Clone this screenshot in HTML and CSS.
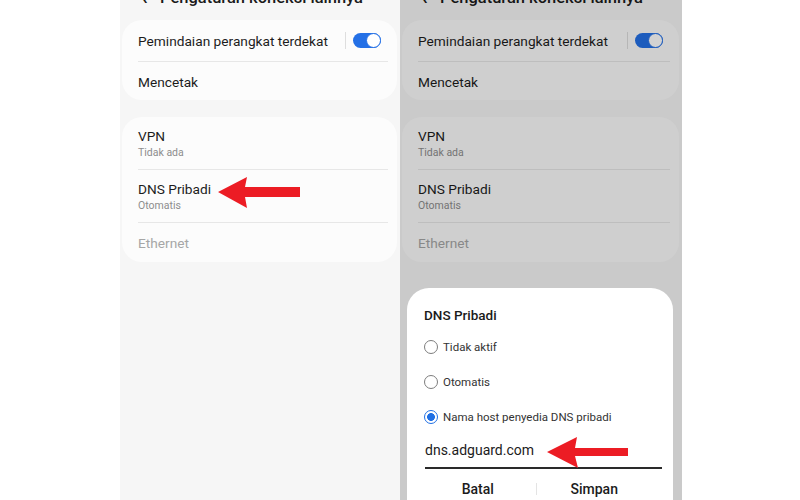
FILE: index.html
```html
<!DOCTYPE html>
<html lang="id">
<head>
<meta charset="utf-8">
<title>DNS Pribadi</title>
<link rel="stylesheet" href="styles.css">
</head>
<body>
<div class="stage">
  <div class="phone phone-left">
    <div class="header"><span class="back">&lsaquo;</span><span class="title">Pengaturan koneksi lainnya</span></div>
    <div class="card">
      <div class="row row-toggle">
        <span class="label">Pemindaian perangkat terdekat</span>
        <span class="vsep"></span>
        <span class="toggle"><span class="knob"></span></span>
      </div>
      <div class="sep"></div>
      <div class="row row-plain"><span class="label">Mencetak</span></div>
    </div>
    <div class="card card2">
      <div class="row row-two"><span class="label">VPN</span><span class="sub">Tidak ada</span></div>
      <div class="sep"></div>
      <div class="row row-two"><span class="label">DNS Pribadi</span><span class="sub">Otomatis</span></div>
      <div class="sep"></div>
      <div class="row row-last"><span class="label dim">Ethernet</span></div>
    </div>
  </div>

  <div class="phone phone-right">
    <div class="header"><span class="back">&lsaquo;</span><span class="title">Pengaturan koneksi lainnya</span></div>
    <div class="card">
      <div class="row row-toggle">
        <span class="label">Pemindaian perangkat terdekat</span>
        <span class="vsep"></span>
        <span class="toggle"><span class="knob"></span></span>
      </div>
      <div class="sep"></div>
      <div class="row row-plain"><span class="label">Mencetak</span></div>
    </div>
    <div class="card card2">
      <div class="row row-two"><span class="label">VPN</span><span class="sub">Tidak ada</span></div>
      <div class="sep"></div>
      <div class="row row-two"><span class="label">DNS Pribadi</span><span class="sub">Otomatis</span></div>
      <div class="sep"></div>
      <div class="row row-last"><span class="label dim">Ethernet</span></div>
    </div>
    <div class="scrim"></div>
    <div class="dialog">
      <div class="dlg-title">DNS Pribadi</div>
      <div class="radio-row"><span class="radio"></span><span class="radio-label">Tidak aktif</span></div>
      <div class="radio-row"><span class="radio"></span><span class="radio-label">Otomatis</span></div>
      <div class="radio-row"><span class="radio radio-on"></span><span class="radio-label">Nama host penyedia DNS pribadi</span></div>
      <div class="input">dns.adguard.com</div>
      <div class="buttons">
        <span class="btn">Batal</span>
        <span class="btn-sep"></span>
        <span class="btn">Simpan</span>
      </div>
    </div>
  </div>

  <svg class="arrow arrow-left" width="84" height="32" viewBox="0 0 84 32">
    <polygon points="0,15 29,0 27,10 82,10 82,20 27,20 29,31" fill="#ec1c24"/>
  </svg>
  <svg class="arrow arrow-right" width="84" height="32" viewBox="0 0 84 32">
    <polygon points="0,15 30,0 28,11 81,11 81,19 28,19 31,31" fill="#ec1c24"/>
  </svg>
</div>
</body>
</html>
```

FILE: styles.css
```css
html, body {
  margin: 0;
  padding: 0;
  background: #ffffff;
}

.stage {
  position: relative;
  width: 800px;
  height: 500px;
  overflow: hidden;
  display: flex;
  padding-left: 120px;
  box-sizing: border-box;
  font-family: Roboto, "Noto Sans", "Liberation Sans", sans-serif;
  color: #1c1c1c;
}

.phone {
  position: relative;
  height: 500px;
  background: #f6f6f6;
  overflow: hidden;
  flex: none;
}

.phone-left { width: 280px; }
.phone-right { width: 282px; }

.header {
  margin-top: -13px;
  height: 21px;
  display: flex;
  align-items: center;
  font-size: 16.5px;
  line-height: 21px;
  font-weight: 500;
  color: #1a1a1a;
}

.back {
  width: 40px;
  padding-left: 21px;
  box-sizing: border-box;
  font-size: 22px;
}

.card {
  margin: 12px 3px 0 2px;
  background: #fcfcfc;
  border-radius: 20px;
}

.card2 { margin-top: 17px; }

.row {
  display: flex;
  padding-left: 16px;
  padding-right: 16px;
}

.label {
  font-size: 13.7px;
  line-height: 18px;
  color: #1c1c1c;
}

.label.dim { color: #a6a6a6; }

.sub {
  font-size: 10.5px;
  line-height: 14px;
  color: #8d8d8d;
  margin-top: 1px;
}

.row-toggle {
  height: 41px;
  align-items: center;
  padding-right: 16px;
}

.row-toggle .label { flex: 1; }

.vsep {
  width: 1px;
  height: 17px;
  background: #dedede;
  margin-right: 7px;
}

.toggle {
  position: relative;
  width: 28px;
  height: 15px;
  border-radius: 8px;
  background: #2470e6;
}

.knob {
  position: absolute;
  right: 0;
  top: 0;
  width: 15px;
  height: 15px;
  box-sizing: border-box;
  border-radius: 50%;
  background: #ffffff;
  border: 1.5px solid #2470e6;
}

.row-plain {
  height: 38px;
  box-sizing: border-box;
  padding-top: 2px;
  align-items: center;
}

.row-two {
  flex-direction: column;
  padding-top: 10px;
  padding-bottom: 9px;
}

.row-last {
  padding-top: 11px;
  padding-bottom: 9px;
}

.row-last .label { line-height: 19px; }

.sep {
  height: 1px;
  background: #e7e7e7;
  margin: 0 9px 0 16px;
}

.scrim {
  position: absolute;
  inset: 0;
  background: rgba(0, 0, 0, 0.175);
}

.dialog {
  position: absolute;
  left: 7px;
  right: 9px;
  top: 288px;
  bottom: -30px;
  background: #ffffff;
  border-radius: 22px;
  padding: 0 11px 0 17px;
}

.dlg-title {
  margin-top: 17px;
  font-size: 13.5px;
  line-height: 20px;
  font-weight: 500;
  color: #1a1a1a;
  margin-bottom: 4px;
}

.radio-row {
  height: 35px;
  display: flex;
  align-items: center;
}

.radio {
  width: 14px;
  height: 14px;
  box-sizing: border-box;
  border: 1.2px solid #7d7d7d;
  border-radius: 50%;
  margin-right: 5px;
  flex: none;
}

.radio-on {
  border: 1.5px solid #1f6fe4;
  background: radial-gradient(circle, #1f6fe4 0, #1f6fe4 3.6px, #ffffff 4.2px);
}

.radio-label {
  font-size: 11.5px;
  color: #333333;
}

.input {
  margin-left: 1px;
  padding: 6px 0 7px 0;
  font-size: 14px;
  line-height: 20px;
  color: #1c1c1c;
  border-bottom: 2px solid #2a2a2a;
}

.buttons {
  display: flex;
  align-items: center;
  height: 40px;
  width: 232px;
  margin-left: -4px;
}

.btn {
  flex: 1;
  text-align: center;
  font-size: 14px;
  font-weight: 500;
  color: #1c1c1c;
}

.btn-sep {
  width: 1px;
  height: 12px;
  background: #e4e4e4;
}

.arrow {
  position: absolute;
}

.arrow-left {
  left: 218px;
  top: 177px;
}

.arrow-right {
  left: 547px;
  top: 437px;
}
```
